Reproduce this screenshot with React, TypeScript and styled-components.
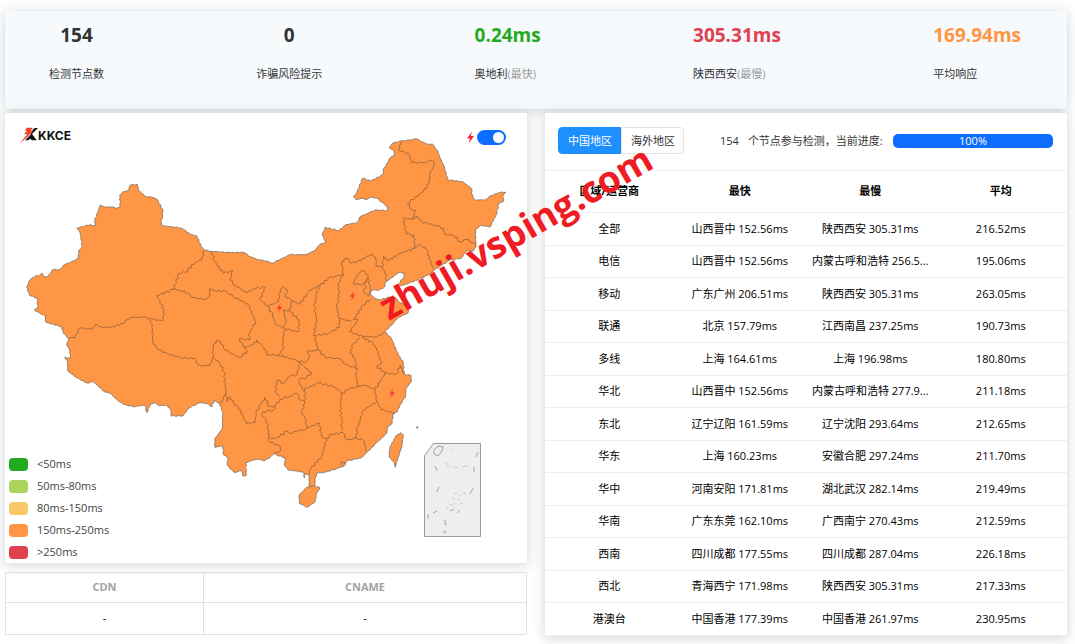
import React from 'react';
import styled, { createGlobalStyle } from 'styled-components';

const GlobalStyle = createGlobalStyle`
  *, *::before, *::after { box-sizing: border-box; }
  body {
    margin: 0;
    background: #fff;
    color: #333;
    font-family: 'Open Sans', 'Noto Sans CJK SC', sans-serif;
    font-size: 11px;
    line-height: 16px;
  }
`;

const Page = styled.main`
  position: relative;
  display: flex;
  flex-direction: column;
  gap: 4px;
  padding: 11px 8px 8px 5px;
  overflow: hidden;
`;

const Card = styled.section`
  background: #fff;
  box-shadow: 0 2px 12px rgba(60, 70, 80, 0.24);
`;

const StatsCard = styled(Card)`
  display: flex;
  justify-content: space-between;
  height: 98px;
  padding: 12px 46px 0 44px;
  background: #f6fafd;
`;

const Stat = styled.div<{ $centered?: boolean }>`
  display: flex;
  flex-direction: column;
  gap: 19px;
  text-align: ${(p) => (p.$centered ? 'center' : 'left')};
`;

const StatValue = styled.strong<{ $color: string }>`
  font-size: 19px;
  line-height: 24px;
  font-weight: 700;
  color: ${(p) => p.$color};
`;

const StatLabel = styled.span`
  line-height: 16px;
`;

const Muted = styled.span`
  color: #999;
`;

const Columns = styled.div`
  display: grid;
  grid-template-columns: minmax(0, 1fr) minmax(0, 1fr);
  gap: 18px;
  align-items: start;
`;

const LeftColumn = styled.div`
  display: flex;
  flex-direction: column;
  gap: 9px;
`;

const MapCard = styled(Card)`
  position: relative;
`;

const MapSvg = styled.svg`
  display: block;
  width: 100%;
  height: auto;
`;

const Logo = styled.a`
  position: absolute;
  top: 14px;
  left: 14px;
  display: flex;
  align-items: center;
  color: #111;
  font-family: Inter, sans-serif;
  font-size: 12px;
  font-weight: 700;
  text-decoration: none;
`;

const MapSwitch = styled.label`
  position: absolute;
  top: 17px;
  right: 21px;
  display: flex;
  align-items: center;
  gap: 2px;
`;

const Toggle = styled.input`
  appearance: none;
  display: flex;
  align-items: center;
  width: 29px;
  height: 15px;
  margin: 0;
  padding: 0 2px;
  border-radius: 8px;
  background: #b8bec6;
  cursor: pointer;

  &::before {
    content: '';
    width: 11px;
    height: 11px;
    border-radius: 50%;
    background: #fff;
  }

  &:checked {
    justify-content: flex-end;
    background: #0d6efd;
  }
`;

const Legend = styled.ul`
  position: absolute;
  left: 4px;
  bottom: 0;
  margin: 0;
  padding: 0;
  list-style: none;
`;

const LegendItem = styled.li`
  display: flex;
  align-items: center;
  gap: 9px;
  height: 22px;
  color: #444;
`;

const Swatch = styled.span<{ $color: string }>`
  width: 19px;
  height: 13px;
  border-radius: 4px;
  background: ${(p) => p.$color};
`;

const DnsTable = styled.table`
  width: 100%;
  border-collapse: collapse;
  table-layout: fixed;
  text-align: center;

  th, td {
    padding: 0 0 1px;
    border: 1px solid #dfe2ea;
  }
  th {
    height: 30px;
    color: #a3a3a3;
    font-weight: 700;
  }
  td {
    height: 32px;
    color: #000;
  }
  th:first-child { width: 38%; }
`;

const Toolbar = styled.div`
  display: flex;
  align-items: center;
  height: 57px;
  padding: 0 14px 2px 13px;
`;

const Tabs = styled.div`
  display: flex;
  margin-right: 36px;
`;

const Tab = styled.button<{ $active?: boolean }>`
  height: 27px;
  padding: 0 8px 0 9px;
  border: 1px solid ${(p) => (p.$active ? '#1e8fff' : '#e4e4e4')};
  border-radius: ${(p) => (p.$active ? '4px 0 0 4px' : '0 4px 4px 0')};
  background: ${(p) => (p.$active ? '#1e8fff' : '#fff')};
  color: ${(p) => (p.$active ? '#fff' : '#333')};
  font: inherit;
  cursor: pointer;
`;

const NodeCount = styled.span`
  margin-right: 9px;
`;

const Progress = styled.div`
  flex: 0 0 160px;
  height: 14px;
  margin-left: auto;
  border-radius: 5px;
  background: #e9ecef;
  overflow: hidden;
`;

const ProgressBar = styled.div`
  height: 100%;
  background: #0d6efd;
  color: #fff;
  line-height: 13px;
  text-align: center;
`;

const ResultTable = styled.table`
  width: 100%;
  border-collapse: separate;
  border-spacing: 0;
  table-layout: fixed;
  color: #000;
  text-align: center;

  th, td {
    height: 33px;
    padding: 0 6px 1px 4px;
    border-bottom: 1px solid #eee;
    font-weight: 400;
    white-space: nowrap;
  }
  thead th {
    height: 43px;
    border-top: 1px solid #eee;
    font-weight: 700;
  }
  tbody tr:nth-child(even) > * { height: 32px; }
`;

const Watermark = styled.div`
  position: absolute;
  left: 393px;
  top: 284px;
  color: #ef1c24;
  font-family: 'Open Sans', sans-serif;
  font-size: 37px;
  font-weight: 700;
  line-height: 44px;
  white-space: nowrap;
  transform: rotate(-30deg);
  transform-origin: left bottom;
  pointer-events: none;
`;

const OUTLINE =
  '26.7,286.7 30,280 36.7,275 38,276.5 42.3,273.3 44.3,277 48.3,276 52.3,270 60,269.3 63.3,265.3 78.3,258.7 78.7,250.7 82.3,246.7 80,232 76.7,228.3 90.7,224.3 92,226 96,225.7 94.7,220.7 100.3,205 105,207 113.3,207 116,208.3 120.3,206.3 119.7,195 122.7,192 129,190.3 130,185.3 137.3,184.3 138.7,190.3 145.7,196.7 151.7,197 156.7,199 162.7,209.3 162.3,218.3 160.7,221 161.7,225.7 181.7,228 190.7,234.7 196.7,235.7 201,246 204.7,250.3 211.3,251.3 230,252.7 241.7,252.3 247.3,254.3 250,256.7 259.3,260 266.7,261 271.7,263.3 290,254.7 306,254.7 314,251 319.3,245 325.7,242 322.3,235 325,227.3 339,230.7 346,224.7 356.7,222.7 361,216 368.3,213.3 375,210 387.7,210.7 386.7,206 376.7,198 370,197.3 367.3,199.3 361,198.3 356,199.3 353.7,196 356,194 362.7,178.3 371,181 382.7,174.7 383.3,170 390,158 394,155.7 393.7,150 389.3,148 392.7,143.3 399.3,141.3 416.7,139 426.7,144 432.3,144 438,151.3 440,158 444,166 447.7,179.7 463.3,182 471.7,188.7 471.3,193.3 474.7,200 485.7,199.7 490,196 499.3,192.7 506,192 502.7,196.7 503.7,201.3 499,203.3 496,215 490,227 481.7,225.3 475.3,229.3 476,246.7 473.3,251 466.7,250.7 461,258.3 450,260 443.3,264 434.3,270 428.3,275 413.3,281.7 403.3,285 396,287.7 398.3,284.3 404,276.7 404.5,272.7 398.3,272.7 393,277 386.7,281 383.3,288.3 376.7,290.3 372.3,290 370,294 375,298.3 380.7,300 388,297 395,297.3 400,302.7 409,307.3 407.7,313.3 398.3,317.3 393.3,323.3 385,331.7 391.7,339 398.3,355 403.3,362.7 404,374 411.3,375.7 411,382 406,388.3 405.7,396 400,405 397.3,411.7 392.7,415 392.3,423.3 387.7,426.7 386.7,433.3 376.7,442.7 366.7,452.7 361.7,457.7 346.7,461 343.3,465.7 336.7,468.7 326,472 316.7,473.3 315,478.3 315,486 309.3,486.3 309,475 305,473.3 304.5,478 303.5,472 295,471 288.3,470 284.7,466 285,457.7 276.7,455 274,453.3 269.3,458.3 263.3,460.7 258,459 253.3,460 245.7,462.7 246.3,475.3 242.7,475.7 241.7,470.7 234,472.3 227.3,465.3 227.7,457.7 223.7,455 222.7,445.7 215,447.3 214.7,439.3 222.3,428.3 222.7,411.7 219.3,403.3 214,400.3 212,406.7 206.7,403.3 200,402.7 188.3,408.3 183.3,415.7 171.3,416 170.7,410 166.7,405 160,405.7 154,402.7 150,404.7 147,412.7 144.7,405 133.3,406.7 123.3,404.3 116.7,399.3 110,393.3 105,392 93.3,381.7 86.7,383 76.7,377.7 67.7,371 67.7,361.7 64.7,357.3 70.3,358 70,350 66.7,345 68.7,338.3 63.3,333.3 61.7,326.7 46,322.3 45,316 34.3,310 37.7,308.3 37.3,298.3 29.3,295 26.7,286.7';

const HAINAN =
  '309.3,486.7 306.7,487.3 299.3,495 299.3,503.3 307.3,507.3 315,501.7 316.7,493.3 320,487.7 313.3,486 309.3,486.7';
const TAIWAN =
  '401,432.7 403.3,435 401.7,446.7 395,467.3 394.3,462.7 389,456.7 390,446.7 396.7,435 401,432.7';

const BORDERS = [
  '204.7,250.3 203.3,254 201.7,260 195,262.3 185.7,272.3 179,273 173.3,289.5',
  '173.3,289.5 156.7,295.7 158.3,298.7 164.3,310 162.7,320.7 151.7,319.3 143.3,317.3 133.3,317.3 126,320 123.3,323.3 110,327.7 101,326.7 96.7,324.3 91.7,329.3 80,328 75,337.3 68.7,338.3',
  '173.3,289.5 180,290 190,294.3 191.7,297.3 205,299.3 209.3,296.7 210,288.3 216.7,292 224,290 233.3,296.7 248.3,304.3 255.7,321.7 249.3,333.3 249.3,340 239.3,339 243.3,346 247.3,351 240,357.3 230,353.3 225,350 220.7,341.7 216,340.7 213.3,346.7 212.7,357.3 210,365 201.7,366 197.7,364.3 194.3,358.3 183.3,358.3 171.7,355 158.3,350 152.7,341.7 152.7,330 150.7,320',
  '212.7,357.3 220,363.3 224,371.7 226,393.3 227.3,401.7',
  '226,393.3 223.3,396.7 221.7,401.7 219.3,403.3',
  '227.3,401.7 230,396.7 235,405 238.3,406.7 246.7,424 255,422.7 256,413.3 261.7,401.7 265,397.7 268.3,401.7 268.3,406.7 275,406 273.3,410 263.3,411.7 261.7,415 266.7,420 269.3,437 268.3,440.7 280,446.7 280,451.7 274,453.3',
  '269.3,437.3 275,439.3 287.3,431 289.3,433.3 301.7,430 306.7,428.3 306,420 301.7,411.7 305,403.3 305,388.3',
  '275,406 280,399.3 290,396 296.7,393.3 300.7,400 305,400.7',
  '280,396.7 275,391.7 277.3,380 283.3,383.3 290,376 296.7,375 300,363.3 311.7,372.7 306.7,377.7 299.3,379.3 300,385 305,392.7',
  '305,388.3 315,385 318.3,382.7 333.3,386.7 338.3,389.3 341.7,393.3 340,406.7 341.7,420 341.7,430',
  '341.7,393.3 350,388.3 358.3,386.7 356,376.7 356.7,368.3 355,368.3 343.3,363.3 340,359 325,357.3 318.3,350',
  '318.3,350 307.3,351.7 310,355 306.7,361.7 299,361.7 293.3,359.3 278.3,355 266.7,355 265,349.3 256.7,340 253.3,345 248.3,346.7 243.3,346',
  '299,361.7 300,363.3',
  '278.3,355 282.7,350 283.3,333.3 285,328.3 298,332 299.3,320 290,311.7',
  '289.3,298.3 285,296.7 287.3,290 283.3,286.7 280,290 278.3,301.7 267.7,306 272.7,315 275,323.3 283.3,328.3 286,321.7 283.3,310 290,310.7 291.7,300 289.3,298.3',
  '211.7,251.7 215,261.7 223.3,273.3 232.7,270.7 230,280 235,285 246.7,293.3 253.3,288.3 265,287.3 260,300 267.7,306',
  '291.7,300.7 300,304 310,290 320,285.7 328.3,278.3 343.3,274.3',
  '320,285.7 316.7,293.3 314.3,306.7 316.7,320 314,335.7 318.3,350',
  '314,335.7 328.3,333.3 339.3,327.3 339.3,318.3 336.7,306.7 339.3,296.7 338.3,283.3 343.3,274.3',
  '343.3,274.3 341.7,261.7 346.7,258.3 351.7,263.3 365,258.3 371.7,253.3 376,260 376.7,266.7 382.3,267.3 383.3,256.7 388.3,260.7 400,253.3 415,248.3',
  '382.3,267.3 385,273.3 386.7,281',
  '415,248.3 414,235 406,234 403.3,218.3 411.7,219.3 416.7,216 421.7,221.7 436.7,226 443.3,228.3 445,235 453.3,235 460,241.7 466.7,239.3 476,245',
  '415,248.3 419,244 426.7,250 433.3,269.5',
  '411.7,219.3 414,215 416,210 412,210 407.3,203.3 423.3,191.7 429.3,183.3 430,173.3 435,163.3 430,160 426.7,162.3 411.7,162.7 408.3,153.3 398.3,150 401.7,141.7',
  '353.3,283.3 356.7,277 361.7,270.7 368.3,275 366.7,281.7 360,285 353.3,283.3',
  '364,283.3 368.3,278.3 370,288 370,294 368.3,296 363.3,291.7 366,288 364,283.3',
  '370.7,299 363.3,305 353.3,320 358.3,320 349.3,331.7 363.3,336.7 376.7,336.7 385,332.7',
  '339.3,318.3 351.7,321.7',
  '360,338.3 353.3,343.3 350,353.3 355,358.3 356.7,368.3',
  '361.7,337 373.3,343.3 376.7,350 381.7,363.3 376.7,366 385,373.3',
  '358.3,386.7 365,385 375,390 385,373.3 396.7,374 400,365 404,374',
  '375,390 376.7,401.7 363.3,410 356.7,430 356.7,438.3 363.3,440 366.7,451.7',
  '376.7,401.7 381.7,410 395,413.3',
  '356.7,438.3 346.7,440 343.3,432.7 331.7,434 326.7,438.3 321.7,436.7 319.3,423.3 306.7,427.7',
  '326.7,438.3 321.7,456.7 309.3,470 309.3,474',
  '340,465 342,461.5 346,462.5 345,465.5 342,467',
];

const ISLAND_MARKS =
  'M478 452l-2 5M435 466l2 5M474 467v5M439 487l-2 5M473 488l-3 6M428 514v5M433 513l4-2M460 510l-3 3M450 511l4-2M445 520v4l2 1M443 531l3 1-2 2';

const ISLAND_DOTS =
  'M445 463l2 1M446 466h3M454 467l4 1M462 467l4-1M460 478l1-1M454 493l3 1M459 495l2 1M464 492l2 3M452 498l3 1M457 499l4 1M449 504l3 1M455 503l-2 2M460 504l3-1M446 509l2-1M465 465l3 3M452 450h2';

/* Splits each segment and nudges the joints so that a border reads as a surveyed line. */
function roughen(points: string, amount: number): string {
  const list = points.split(' ').map((p) => p.split(',').map(Number));
  let d = `M${list[0][0]} ${list[0][1]}`;
  for (let i = 1; i < list.length; i++) {
    const [x0, y0] = list[i - 1];
    const [x1, y1] = list[i];
    const length = Math.hypot(x1 - x0, y1 - y0);
    const steps = Math.max(1, Math.round(length / 2.4));
    for (let s = 1; s < steps; s++) {
      const t = s / steps;
      const wave = Math.sin((x0 + y1) * 12.9 + s * 78.2) * amount;
      const x = x0 + (x1 - x0) * t - ((y1 - y0) / length) * wave;
      const y = y0 + (y1 - y0) * t + ((x1 - x0) / length) * wave;
      d += `L${x.toFixed(1)} ${y.toFixed(1)}`;
    }
    d += `L${x1} ${y1}`;
  }
  return d;
}

const BOLT = 'M1.5 -6L-3.5 1H-0.4L-1.8 6L3.5 -1.6H0.3Z';

const LEGEND = [
  ['#23ab20', '<50ms'],
  ['#acd35a', '50ms-80ms'],
  ['#f9c767', '80ms-150ms'],
  ['#ff9645', '150ms-250ms'],
  ['#e0414f', '>250ms'],
];

const ROWS = [
  ['全部', '山西晋中 152.56ms', '陕西西安 305.31ms', '216.52ms'],
  ['电信', '山西晋中 152.56ms', '内蒙古呼和浩特 256.5...', '195.06ms'],
  ['移动', '广东广州 206.51ms', '陕西西安 305.31ms', '263.05ms'],
  ['联通', '北京 157.79ms', '江西南昌 237.25ms', '190.73ms'],
  ['多线', '上海 164.61ms', '上海 196.98ms', '180.80ms'],
  ['华北', '山西晋中 152.56ms', '内蒙古呼和浩特 277.9...', '211.18ms'],
  ['东北', '辽宁辽阳 161.59ms', '辽宁沈阳 293.64ms', '212.65ms'],
  ['华东', '上海 160.23ms', '安徽合肥 297.24ms', '211.70ms'],
  ['华中', '河南安阳 171.81ms', '湖北武汉 282.14ms', '219.49ms'],
  ['华南', '广东东莞 162.10ms', '广西南宁 270.43ms', '212.59ms'],
  ['西南', '四川成都 177.55ms', '四川成都 287.04ms', '226.18ms'],
  ['西北', '青海西宁 171.98ms', '陕西西安 305.31ms', '217.33ms'],
  ['港澳台', '中国香港 177.39ms', '中国香港 261.97ms', '230.95ms'],
];

function ChinaMap() {
  return (
    <MapSvg viewBox="5 113 522 450" role="img" aria-label="中国地区">
      <g fill="#ff9645" stroke="#8b7866" strokeWidth="0.9" strokeLinejoin="round">
        <path d={roughen(OUTLINE, 0.5)} />
        <path d={roughen(HAINAN, 0.4)} />
        <path d={roughen(TAIWAN, 0.3)} />
      </g>
      <g fill="none" stroke="#93603a" strokeWidth="0.8" strokeLinejoin="round">
        {BORDERS.map((points) => (
          <path key={points} d={roughen(points, 1.1)} />
        ))}
      </g>
      <path d="M415.5 428l2-2 1 1-1 1.500z" fill="#777" />
      <path d="M433.500 443.500H480.500V536.500H424.500V455.500Z" fill="#eee" stroke="#999" />
      <path d="M434 450l4-4 5 1-1 4-4 5-4-2z" fill="none" stroke="#888" strokeWidth="0.8" />
      <path d={ISLAND_MARKS} fill="none" stroke="#888" strokeWidth="0.7" />
      <path d={ISLAND_DOTS} fill="none" stroke="#b4b4b4" strokeWidth="0.6" />
      <g fill="#ff3b30">
        <path d={BOLT} transform="translate(279.500 308) scale(0.8)" />
        <path d={BOLT} transform="translate(352.500 296) scale(0.8)" />
        <path d={BOLT} transform="translate(392 393.500) scale(0.8)" />
      </g>
    </MapSvg>
  );
}

export default function App() {
  return (
    <>
      <GlobalStyle />
      <Page>
        <StatsCard>
          <Stat $centered>
            <StatValue $color="#333">154</StatValue>
            <StatLabel>检测节点数</StatLabel>
          </Stat>
          <Stat $centered>
            <StatValue $color="#333">0</StatValue>
            <StatLabel>诈骗风险提示</StatLabel>
          </Stat>
          <Stat>
            <StatValue $color="#23ab20">0.24ms</StatValue>
            <StatLabel>奥地利<Muted>(最快)</Muted></StatLabel>
          </Stat>
          <Stat>
            <StatValue $color="#e0414f">305.31ms</StatValue>
            <StatLabel>陕西西安<Muted>(最慢)</Muted></StatLabel>
          </Stat>
          <Stat>
            <StatValue $color="#ff9645">169.94ms</StatValue>
            <StatLabel>平均响应</StatLabel>
          </Stat>
        </StatsCard>

        <Columns>
          <LeftColumn>
            <MapCard>
              <ChinaMap />
              <Logo href="#">
                <svg width="19" height="17" viewBox="56 52 57 51" aria-hidden="true">
                  <path d="M97 60L103 55H113L95 73L109 92H95L90 87L83 92H74L90 76Z" fill="#111" />
                  <path d="M79 54H98L91 63H99L80 83L57 102L74 82L82 74H71L80 63H74Z" fill="#ef4426" />
                </svg>
                KKCE
              </Logo>
              <MapSwitch>
                <svg width="9" height="15" viewBox="-4.500 -7 9 14" aria-hidden="true">
                  <path d={BOLT} fill="#f5222d" />
                </svg>
                <Toggle type="checkbox" role="switch" defaultChecked aria-label="闪电" />
              </MapSwitch>
              <Legend>
                {LEGEND.map(([color, label]) => (
                  <LegendItem key={label}>
                    <Swatch $color={color} />
                    {label}
                  </LegendItem>
                ))}
              </Legend>
            </MapCard>
            <DnsTable>
              <thead>
                <tr>
                  <th scope="col">CDN</th>
                  <th scope="col">CNAME</th>
                </tr>
              </thead>
              <tbody>
                <tr>
                  <td>-</td>
                  <td>-</td>
                </tr>
              </tbody>
            </DnsTable>
          </LeftColumn>

          <Card>
            <Toolbar>
              <Tabs>
                <Tab type="button" $active>中国地区</Tab>
                <Tab type="button">海外地区</Tab>
              </Tabs>
              <NodeCount>154</NodeCount>
              <span>个节点参与检测，当前进度:</span>
              <Progress role="progressbar" aria-valuenow={100} aria-label="当前进度">
                <ProgressBar>100%</ProgressBar>
              </Progress>
            </Toolbar>
            <ResultTable>
              <thead>
                <tr>
                  <th scope="col">区域/运营商</th>
                  <th scope="col">最快</th>
                  <th scope="col">最慢</th>
                  <th scope="col">平均</th>
                </tr>
              </thead>
              <tbody>
                {ROWS.map(([area, fastest, slowest, average]) => (
                  <tr key={area}>
                    <th scope="row">{area}</th>
                    <td>{fastest}</td>
                    <td>{slowest}</td>
                    <td>{average}</td>
                  </tr>
                ))}
              </tbody>
            </ResultTable>
          </Card>
        </Columns>
        <Watermark>zhuji.vsping.com</Watermark>
      </Page>
    </>
  );
}
